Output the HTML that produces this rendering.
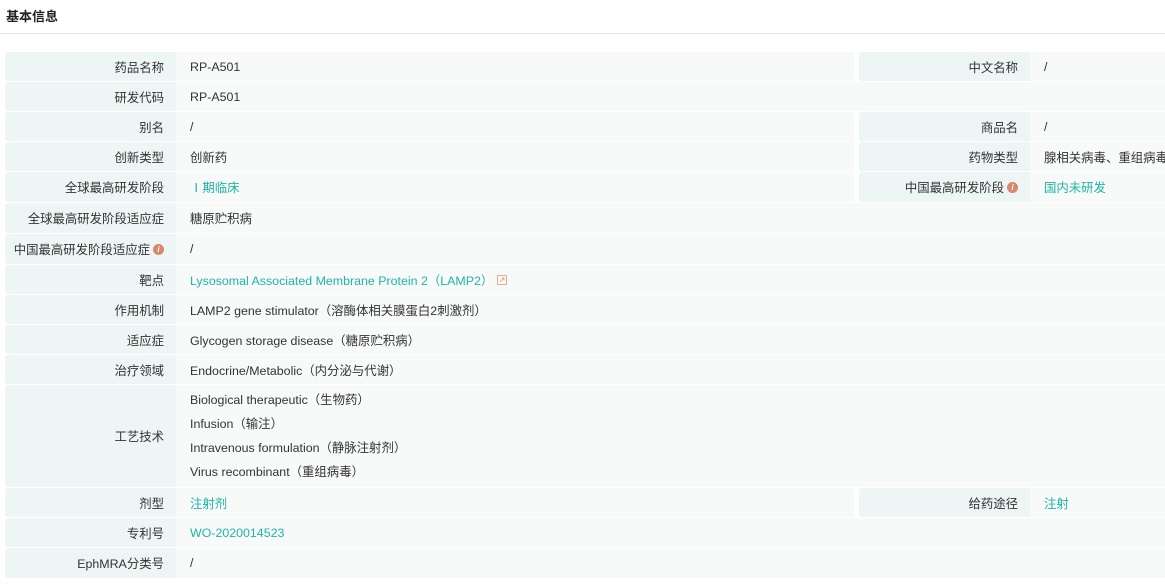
<!DOCTYPE html>
<html><head><meta charset="utf-8"><style>
*{margin:0;padding:0;box-sizing:border-box}
body{width:1165px;height:585px;background:#fff;font-family:"Liberation Sans","Noto Sans CJK SC",sans-serif;font-size:12.4px;color:#333;position:relative;overflow:hidden}
.t{position:absolute;left:6px;top:6px;font-weight:bold;font-size:13px;color:#222}
.hr{position:absolute;left:0;right:0;top:33px;height:1px;background:#e8e8e8}
.r{position:absolute;left:5px;width:1160px}
.l,.v,.l2,.v2{position:absolute;top:0;bottom:0;display:flex;align-items:center}
.l{left:0;width:171px;background:#eef5f5;border-radius:3px 0 0 3px;justify-content:flex-end;padding-right:12px}
.v{left:171px;width:989px;background:#f8fafa;padding-left:14px}
.l2{left:854px;width:171px;background:#eef5f5;border-radius:3px 0 0 3px;justify-content:flex-end;padding-right:12px;box-shadow:-5px 0 0 #fff}
.v2{left:1025px;right:0;background:#f8fafa;padding-left:14px;white-space:nowrap}
.g{color:#1fb5a5}
.i{display:inline-block;width:11px;height:11px;border-radius:50%;background:#d9886a;color:#fff;font-size:8px;line-height:11px;text-align:center;font-style:italic;font-weight:bold;margin-left:3px}
.multi{flex-direction:column;align-items:flex-start;justify-content:center}
.multi div{height:24px;line-height:24px}
</style></head><body>
<div class="t">基本信息</div><div class="hr"></div>

<div class="r" style="top:52px;height:29px"><div class="l">药品名称</div><div class="v">RP-A501</div><div class="l2">中文名称</div><div class="v2">/</div></div>
<div class="r" style="top:82px;height:29px"><div class="l">研发代码</div><div class="v">RP-A501</div></div>
<div class="r" style="top:112px;height:29px"><div class="l">别名</div><div class="v">/</div><div class="l2">商品名</div><div class="v2">/</div></div>
<div class="r" style="top:142px;height:29px"><div class="l">创新类型</div><div class="v">创新药</div><div class="l2">药物类型</div><div class="v2">腺相关病毒、重组病毒</div></div>
<div class="r" style="top:172px;height:30px"><div class="l">全球最高研发阶段</div><div class="v g">Ⅰ期临床</div><div class="l2">中国最高研发阶段<span class="i">i</span></div><div class="v2 g">国内未研发</div></div>
<div class="r" style="top:203px;height:30px"><div class="l">全球最高研发阶段适应症</div><div class="v">糖原贮积病</div></div>
<div class="r" style="top:234px;height:30px"><div class="l">中国最高研发阶段适应症<span class="i">i</span></div><div class="v">/</div></div>
<div class="r" style="top:265px;height:29px"><div class="l">靶点</div><div class="v g">Lysosomal Associated Membrane Protein 2（LAMP2）<svg width="10" height="10" viewBox="0 0 10 10" style="margin-left:4px"><rect x="0.5" y="0.5" width="9" height="9" fill="none" stroke="#e0b08c"/><path d="M3 7L7 3M4.5 3H7V5.5" stroke="#e0b08c" fill="none"/></svg></div></div>
<div class="r" style="top:295px;height:29px"><div class="l">作用机制</div><div class="v">LAMP2 gene stimulator（溶酶体相关膜蛋白2刺激剂）</div></div>
<div class="r" style="top:325px;height:29px"><div class="l">适应症</div><div class="v">Glycogen storage disease（糖原贮积病）</div></div>
<div class="r" style="top:355px;height:29px"><div class="l">治疗领域</div><div class="v">Endocrine/Metabolic（内分泌与代谢）</div></div>
<div class="r" style="top:385px;height:102px"><div class="l">工艺技术</div><div class="v multi"><div>Biological therapeutic（生物药）</div><div>Infusion（输注）</div><div>Intravenous formulation（静脉注射剂）</div><div>Virus recombinant（重组病毒）</div></div></div>
<div class="r" style="top:488px;height:29px"><div class="l">剂型</div><div class="v g">注射剂</div><div class="l2">给药途径</div><div class="v2 g">注射</div></div>
<div class="r" style="top:518px;height:29px"><div class="l">专利号</div><div class="v g">WO-2020014523</div></div>
<div class="r" style="top:548px;height:30px"><div class="l">EphMRA分类号</div><div class="v">/</div></div>
</body></html>
